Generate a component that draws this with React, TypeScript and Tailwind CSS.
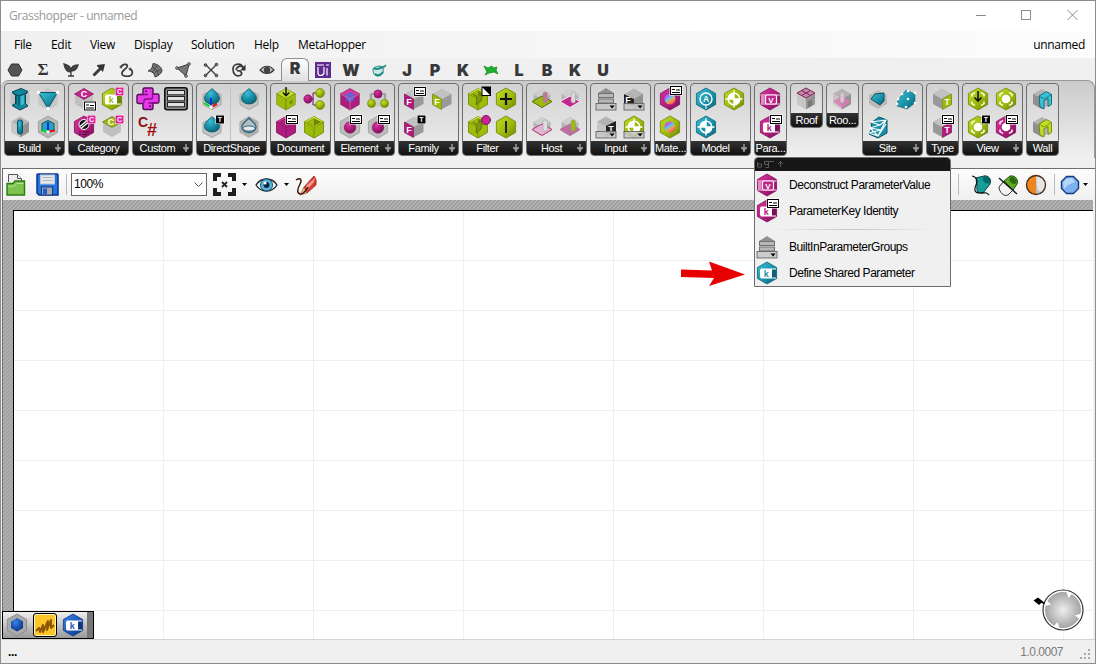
import React from "react";

type P = { children?: React.ReactNode };

const HEX = "12,1 21.6,6.5 21.6,17.5 12,23 2.4,17.5 2.4,6.5";

const tones = {
  m: ["#d9359f", "#b01c7e", "#7d0f58"],
  g: ["#c3dc28", "#9dbb0b", "#6d8404"],
  c: ["#3cc0d6", "#1993ab", "#0c6376"],
  s: ["#dcdcdc", "#b4b4b4", "#8e8e8e"],
  b: ["#3c86e6", "#1c58b8", "#0d3580"],
} as const;
type Tone = keyof typeof tones;

const Icon = ({ children }: P) => (
  <svg viewBox="0 0 24 24" className="block h-6 w-6 shrink-0 overflow-visible">{children}</svg>
);

const Defs = () => (
  <svg className="absolute h-0 w-0">
    <defs>
      {(Object.keys(tones) as Tone[]).map((k) => (
        <React.Fragment key={k}>
          <linearGradient id={"lin-" + k} x1="0" y1="0" x2="1" y2="1">
            <stop offset="0" stopColor={tones[k][0]} />
            <stop offset=".55" stopColor={tones[k][1]} />
            <stop offset="1" stopColor={tones[k][2]} />
          </linearGradient>
          <radialGradient id={"rad-" + k} cx=".38" cy=".3" r=".75">
            <stop offset="0" stopColor={tones[k][0]} />
            <stop offset=".5" stopColor={tones[k][1]} />
            <stop offset="1" stopColor={tones[k][2]} />
          </radialGradient>
        </React.Fragment>
      ))}
      <linearGradient id="rainbow" x1=".1" y1="0" x2=".8" y2="1">
        <stop offset="0" stopColor="#5b6df2" />
        <stop offset=".25" stopColor="#c55bf0" />
        <stop offset=".45" stopColor="#58c8f0" />
        <stop offset=".65" stopColor="#f5a04a" />
        <stop offset="1" stopColor="#f23b6a" />
      </linearGradient>
    </defs>
  </svg>
);

const Hex = ({ t }: { t: Tone }) => (
  <polygon points={HEX} fill={`url(#lin-${t})`} stroke={tones[t][2]} strokeWidth=".8" />
);

const Cube = ({ t }: { t: Tone }) => (
  <g strokeWidth=".6" strokeLinejoin="round">
    <polygon points="12,1.5 21.3,6.7 12,12 2.7,6.7" fill={tones[t][0]} stroke={tones[t][2]} />
    <polygon points="2.7,6.7 12,12 12,23 2.7,17.5" fill={tones[t][1]} stroke={tones[t][2]} />
    <polygon points="21.3,6.7 12,12 12,23 21.3,17.5" fill={tones[t][1]} stroke={tones[t][2]} />
  </g>
);

const SoftCube = () => (
  <g>
    <polygon points="12,1.5 21,6.7 12,12 3,6.7" fill="#b4b4b4" />
    <polygon points="3,6.7 12,12 12,22.5 3,17.3" fill="#c6c6c6" />
    <polygon points="21,6.7 12,12 12,22.5 21,17.3" fill="#929292" />
  </g>
);

const OpenCube = ({ t }: { t: Tone }) => (
  <g strokeWidth=".8" strokeLinejoin="round">
    <polygon points="12,1.5 21.5,6.7 21.5,17.5 12,23 2.5,17.5 2.5,6.7" fill={tones[t][1]} stroke={tones[t][2]} />
    <polygon points="12,1.5 21.5,6.7 12,12.3 2.5,6.7" fill={tones[t][0]} />
    <polygon points="12,3.8 18.5,7 12,10.6 5.5,7" fill={tones[t][2]} stroke={tones[t][2]} />
    <polygon points="12,3.8 12,10.6 5.5,7" fill={tones[t][1]} />
    <path d="M2.5 6.7 12 12.3 21.5 6.7M12 12.3V23" fill="none" stroke={tones[t][2]} />
  </g>
);

const Tag = ({ x = 12, y = 0 }: { x?: number; y?: number }) => (
  <g>
    <rect x={x - 0.5} y={y - 0.5} width="13" height="10" fill="#fff" />
    <rect x={x + 0.5} y={y + 0.5} width="11" height="8" fill="#fff" stroke="#000" />
    <path d={`M${x + 2} ${y + 3.5}h3M${x + 6} ${y + 4}h4M${x + 2} ${y + 6.5}h8`} stroke="#000" strokeWidth="1.2" />
  </g>
);

const Badge = ({ l, fill, x = 16, y = 0.5 }: { l: string; fill: string; x?: number; y?: number }) => (
  <g>
    <rect x={x - 0.5} y={y - 0.5} width="9" height="9" fill="#fff" />
    <rect x={x} y={y} width="8" height="8" fill={fill} />
    <text x={x + 4} y={y + 6.6} fontSize="7" fontWeight="700" textAnchor="middle" fill="#fff" fontFamily="Liberation Sans, sans-serif">{l}</text>
  </g>
);

const Ltr = ({ x, y, s = 9, f = "#fff", children }: P & { x: number; y: number; s?: number; f?: string }) => (
  <text x={x} y={y} fontSize={s} fontWeight="700" textAnchor="middle" fill={f} fontFamily="Liberation Sans, sans-serif">{children}</text>
);

const KBody = ({ t }: { t: Tone }) => (
  <g>
    <Hex t={t} />
    <path d="M6 7.5h15v10H6l-1-1.5V9z" fill="#fff" />
    <rect x="17" y="8.5" width="4.2" height="8" fill={tones[t][2]} />
    <Ltr x={11.3} y={16} s={9} f={tones[t][1]}>k</Ltr>
  </g>
);
const VIcon = () => (
  <Icon>
    <Hex t="m" />
    <path d="M2.5 8h19.3M2.5 17h19.3" stroke="#f7d4ea" strokeWidth="1.1" />
    <rect x="3" y="8.5" width="3.5" height="8" fill="#e58bc6" />
    <rect x="7.5" y="8" width="11" height="9" rx="1.5" fill="#bd2489" stroke="#fff" strokeWidth="1.2" />
    <Ltr x={13} y={15.6} s={8}>V</Ltr>
  </Icon>
);
const KTag = () => <Icon><KBody t="m" /><Tag /></Icon>;
const KCyan = () => <Icon><KBody t="c" /></Icon>;

const DropBox = () => (
  <g>
    <rect x="2" y="16.5" width="20" height="6.5" fill="#c4c4c4" fillOpacity=".85" stroke="#666" strokeWidth=".9" />
    <path d="M15.5 18.5h5.2l-2.6 3z" fill="#000" />
  </g>
);
const ListIcon = () => (
  <Icon>
    <path d="M4 6.5 12 1.5l8 5z" fill="#909090" stroke="#777" strokeWidth=".6" />
    <rect x="4.5" y="6.5" width="15" height="4" fill="#b8b8b8" stroke="#707070" />
    <rect x="4.5" y="12" width="15" height="4" fill="#b8b8b8" stroke="#707070" />
    <DropBox />
  </Icon>
);

const Target = ({ t }: { t: Tone }) => (
  <g>
    <Hex t={t} />
    <circle cx="12" cy="12" r="5.8" fill={tones[t][1]} stroke="#fff" strokeWidth="1.5" />
    <path d="M12 3.5v17M3.5 12h17" stroke="#fff" strokeWidth="1.4" />
    <path d="M12 6.5V12H6.5A5.5 5.5 0 0 1 12 6.5M12 17.5V12h5.5A5.5 5.5 0 0 1 12 17.5" fill="#fff" />
  </g>
);

const Ball = ({ x, y, r, t }: { x: number; y: number; r: number; t: Tone }) => (
  <circle cx={x} cy={y} r={r} fill={`url(#rad-${t})`} stroke={tones[t][2]} strokeWidth=".6" />
);

const Drop = () => (
  <g>
    <polygon points="12,3 21,7.5 21,17.5 12,22.5 3,17.5 3,7.5" fill="#c4c4c4" stroke="#a4a4a4" />
    <path d="M12 1.500c2 2.500 7.500 5.500 7.500 10a7.500 5.500 0 0 1-15 0c0-4.500 5.500-7.500 7.500-10z" fill="url(#rad-c)" stroke="#0c5365" strokeWidth=".8" />
  </g>
);

const Frame = ({ t }: { t: Tone }) => (
  <g>
    <Hex t={t} />
    <path d="M6 9.500V7.500L9 5.500M15 5.500l3 2v2M18 14.500v2l-3 2M9 18.500l-3-2v-2" fill="none" stroke="#fff" strokeWidth="1.500" />
  </g>
);
const ViewHex = ({ t }: { t: Tone }) => (
  <g>
    <Frame t={t} />
    <circle cx="12" cy="12" r="4.300" fill="#fff" />
  </g>
);
const FCube = ({ t }: { t: Tone }) => (
  <g>
    <polygon points="12,2 21.500,7 21.500,17 12,22 12,12 3,7" fill="#999" />
    <polygon points="12,2 21.500,7 12,12 3,7" fill="#c2c2c2" />
    <polygon points="2.500,7 11.500,12 11.500,22.500 2.500,17.500" fill={tones[t][1]} stroke={tones[t][2]} strokeWidth=".7" />
    <Ltr x={7} y={18} s={9}>F</Ltr>
  </g>
);
const TCube = ({ t }: { t: Tone }) => (
  <g>
    <polygon points="12,2 3,7 3,17 12,22 12,12 21,7" fill="#999" />
    <polygon points="3,7 12,2 21,7 12,12" fill="#c2c2c2" />
    <polygon points="12.500,12 21.500,7 21.500,17.500 12.500,22.500" fill={tones[t][1]} stroke={tones[t][2]} strokeWidth=".7" />
    <Ltr x={17} y={18} s={8.5}>T</Ltr>
  </g>
);
const HostBase = ({ fill, stroke, o = 1 }: { fill: string; stroke: string; o?: number }) => (
  <g>
    <polygon points="12,2 20.500,7 20.500,16 12,21 3.500,16 3.500,7" fill="#b5b5b5" />
    <polygon points="12,2 20.500,7 12,12 3.500,7" fill="#cfcfcf" />
    <polygon points="12,9 22,14.500 12,20.500 2,14.500" fill={fill} stroke={stroke} opacity={o} />
  </g>
);
const Pill = ({ fill, x = 13 }: { fill: string; x?: number }) => (
  <rect x={x} y="5" width="4.500" height="11" rx="2" fill={fill} stroke="#8a8a8a" strokeWidth=".4" />
);
const WallArch = ({ t }: { t: Tone }) => (
  <Icon>
    <polygon points="3,7 12,2 21,7 21,17 12,22 3,17" fill="#b2b2b2" />
    <polygon points="3,7 12,12 12,22 3,17" fill="#8f8f8f" />
    <path d="M9 9 16.500 4.500 21.500 7.500V17.500L18 19.500V11.500L14 13.800V22L10 20z" fill={tones[t][0]} stroke={tones[t][2]} strokeWidth=".9" strokeLinejoin="round" />
    <path d="M9 9 14 12 21.500 7.500" stroke={tones[t][2]} strokeWidth=".7" fill="none" />
  </Icon>
);

const icons: Record<string, React.ReactNode> = {
  beam: <Icon><polygon points={HEX} fill="#c2c2c2" /><path d="M4 5 13 1.500l7 3-2.500 3v9l2.500 2.500-8 4-8-4.500 3.500-2V8.500z" fill="#13899f" stroke="#0a4552" /><path d="M4 5.500 11 9l8-3.500M11 9v10M8 8v9" stroke="#064351" fill="none" /><path d="M12.500 9.500 16 8v9l-3.500 1.500z" fill="#3cbcd2" /></Icon>,
  tri: <Icon><polygon points={HEX} fill="#c6c6c6" /><path d="M2.500 5.500H21.500L12 21.500z" fill="url(#lin-c)" stroke="#0a5260" />{[[2.5, 5.5], [21.5, 5.5], [12, 21.5]].map(([x, y]) => <circle key={x} cx={x} cy={y} r="1.700" fill="#fff" />)}</Icon>,
  column: <Icon><SoftCube /><rect x="9.500" y="5" width="5" height="14" rx="2" fill="url(#rad-c)" stroke="#0b5566" /></Icon>,
  axes: <Icon><polygon points={HEX} fill="#b9b9b9" stroke="#a2a2a2" /><polygon points="12,5.500 18,8.500 18,15 12,18.500 6,15 6,8.500" fill="#24a7bd" stroke="#0b5566" /><path d="M12 16V7" stroke="#0930e0" strokeWidth="2.200" /><path d="M12 16.500 5 15.500" stroke="#00e020" strokeWidth="2" /><path d="M12 16.500l7-1" stroke="#e81010" strokeWidth="2" /><circle cx="12" cy="17" r="1.800" fill="#fff" /></Icon>,
  catTag: <Icon><polygon points="3,8 12,13 21,8 21,17 12,22 3,17" fill="#c0c0c0" /><polygon points="12,1.500 21.500,7 12,12.500 2.500,7" fill="#c2258d" stroke="#7d0f58" strokeWidth=".7" /><Ltr x={12} y={10.3}>C</Ltr><Tag x={12} y={14.5} /></Icon>,
  catK: <Icon><KBody t="g" /><Badge l="C" fill="#e0219a" x={15.5} /></Icon>,
  catHatch: <Icon><Hex t="m" /><circle cx="12" cy="9.500" r="5" fill="#111" stroke="#fff" /><path d="M8 11.500 14.500 6M9 13.500l7-6" stroke="#fff" strokeWidth="1.400" /><path d="M7 17h2M10.500 17H17M7 19.500h2M10.500 19.500H15" stroke="#4c0635" /><Badge l="C" fill="#e0219a" x={15.5} /></Icon>,
  catC: <Icon><polygon points="3,8 12,13 21,8 21,17 12,22 3,17" fill="#c0c0c0" /><polygon points="12,1.500 21.500,7 12,12.500 2.500,7" fill="#9dbb0b" stroke="#5c7003" strokeWidth=".7" /><Ltr x={11} y={10.3}>C</Ltr><Badge l="C" fill="#e0219a" x={15.5} /></Icon>,
  python: <Icon><path d="M8.500 1h7q1.500 0 1.500 1.500V7h4.500q1.500 0 1.500 1.500v6q0 1.500-1.500 1.500H17v5q0 1.500-1.500 1.500h-7Q7 22.500 7 21v-4.500H2.500Q1 16.500 1 15V9q0-1.500 1.500-1.500H7v-5Q7 1 8.500 1z" fill="#e838ea" stroke="#520c57" strokeWidth="1.400" strokeLinejoin="round" /><path d="M4 7.500h8M12.500 16H20M8 16v-2q0-2 2-2h4.500q2 0 2-2V7" fill="none" stroke="#7c1082" strokeWidth="1.300" /><circle cx="10" cy="4.300" r="1" fill="#520c57" /><circle cx="14" cy="19.300" r="1" fill="#520c57" /></Icon>,
  panel: <Icon><rect x=".800" y=".800" width="22.400" height="22" rx="2.500" fill="#8f8f8f" stroke="#111" strokeWidth="1.600" />{[4, 10, 16].map((y) => <rect key={y} x="3.500" y={y - 0.5} width="17" height="4.300" fill="#e2e2e2" stroke="#222" />)}</Icon>,
  csharp: <Icon><Ltr x={7} y={11.5} s={14} f="#8e1010">C</Ltr><Ltr x={16} y={20.5} s={18} f="#a31010">#</Ltr></Icon>,
  dsAxes: <Icon><Drop /><path d="M11 20V11" stroke="#0930e0" strokeWidth="2" /><path d="M11 20 4 16" stroke="#00e020" strokeWidth="2" /><path d="M11 20l6-3" stroke="#e81010" strokeWidth="2" /><circle cx="11" cy="20" r="1.800" fill="#fff" /></Icon>,
  dsDrop: <Icon><Drop /></Icon>,
  dsT: <Icon><Drop /><Badge l="T" fill="#000" /></Icon>,
  dsRing: <Icon><polygon points={HEX} fill="#b0b0b0" /><path d="M12 3c2.500 3 7 5 7 9a7 5.500 0 0 1-14 0c0-4 4.500-6 7-9z" fill="#b6bfc3" stroke="#32667d" strokeWidth="1.300" /><ellipse cx="12" cy="13.500" rx="6" ry="2.600" fill="#e6eaec" stroke="#32667d" /></Icon>,
  docDown: <Icon><Cube t="g" /><path d="M12 0v8.500M8.800 5.500 12 8.800l3.200-3.300" fill="none" stroke="#111" strokeWidth="1.400" /><path d="M15.500 14l3-1.700v4l-3 1.700z" fill="#7a9107" /></Icon>,
  docTree: <Icon><path d="M6 12H12M17 6h-6v12h6" fill="none" stroke="#6d1a52" /><Ball x={6} y={12} r={4.2} t="m" /><Ball x={18} y={6} r={4.5} t="g" /><Ball x={18} y={18} r={4.5} t="g" /></Icon>,
  docTag: <Icon><OpenCube t="m" /><Tag /></Icon>,
  docOpen: <Icon><OpenCube t="g" /></Icon>,
  elCube: <Icon><Cube t="m" /><polygon points="12,5 16.500,7.500 16.500,13 12,15.500 7.500,13 7.500,7.500" fill="#3f6fe0" opacity=".75" /><path d="M12 12V23M12 12l9-5M12 12 3 7" stroke="#e07fc0" strokeWidth=".8" fill="none" /></Icon>,
  elTree: <Icon><polygon points="12,1 21,6.500 21,15 12,20 3,15 3,6.500" fill="#cacaca" /><path d="M5 17V7h14v10" fill="none" stroke="#7a7a7a" /><Ball x={12} y={7} r={4} t="m" /><Ball x={5.5} y={16.5} r={4} t="g" /><Ball x={18.5} y={16.5} r={4} t="g" /></Icon>,
  elTag: <Icon><polygon points={HEX} fill="#bcbcbc" stroke="#a6a6a6" /><Ball x={12} y={12.5} r={5.7} t="m" /><Tag /></Icon>,
  famTag: <Icon><FCube t="m" /><Tag y={0} /></Icon>,
  famG: <Icon><FCube t="g" /></Icon>,
  famT: <Icon><FCube t="m" /><Badge l="T" fill="#000" x={15.5} /></Icon>,
  filBW: <Icon><OpenCube t="g" /><path d="M7 7l4 4-1 7 5-4 1-5" stroke="#5f7608" fill="#7e990a" strokeWidth="1" /><rect x="16" y="0" width="8.500" height="8.500" fill="#fff" stroke="#000" /><path d="M16 0h8.500v8.500z" fill="#000" /></Icon>,
  filPlus: <Icon><Hex t="g" /><path d="M12 6v12M6 12h12" stroke="#111" strokeWidth="2.200" /></Icon>,
  filDot: <Icon><OpenCube t="g" /><path d="M7 7l4 4-1 7 5-4 1-5" stroke="#5f7608" fill="#7e990a" strokeWidth="1" /><circle cx="20" cy="5" r="4.500" fill="#c4278f" stroke="#83135f" /></Icon>,
  filBar: <Icon><Hex t="g" /><path d="M12 6v12" stroke="#222" strokeWidth="2" /></Icon>,
  hostG: <Icon><HostBase fill="#9dbb0b" stroke="#5c7003" /><Pill fill="#c37896" /></Icon>,
  hostM: <Icon><HostBase fill="#c4278f" stroke="#f3f3f3" /><Pill fill="#d8d8d8" /></Icon>,
  hostP: <Icon><HostBase fill="#e3b7d2" stroke="#b5327f" /><Pill fill="#dedede" /></Icon>,
  hostPG: <Icon><HostBase fill="#c25c9e" stroke="#ad5c93" o={0.8} /><Pill fill="#9dbb0b" x={13} /></Icon>,
  list: <ListIcon />,
  inF: <Icon><SoftCube /><polygon points="2,7 12,12 12,18 2,17" fill="#222" /><Ltr x={6} y={16}>F</Ltr><DropBox /></Icon>,
  inT: <Icon><SoftCube /><polygon points="12,11 22,6 22,18 12,18" fill="#222" /><Ltr x={17} y={16.5}>T</Ltr><DropBox /></Icon>,
  inTarget: <Icon><Target t="g" /><DropBox /></Icon>,
  matM: <Icon><Hex t="m" /><circle cx="12" cy="12" r="5.500" fill="url(#rainbow)" /><Tag y={-1} /></Icon>,
  matG: <Icon><Hex t="g" /><circle cx="12" cy="12" r="5.500" fill="url(#rainbow)" /></Icon>,
  modA: <Icon><Hex t="c" /><circle cx="12" cy="12" r="6" fill="none" stroke="#fff" strokeWidth="1.400" /><Ltr x={12} y={15} s={8.5}>A</Ltr><path d="M12 18v4" stroke="#fff" /></Icon>,
  modG: <Icon><Target t="g" /></Icon>,
  modC: <Icon><Target t="c" /></Icon>,
  v: <VIcon />,
  kTag: <KTag />,
  roof: <Icon><SoftCube /><polygon points="12,1 21,6 12,11 3,6" fill="#c889aa" stroke="#7c2758" /><path d="M7.500 3.500l9 5M16.500 3.500l-9 5" stroke="#7c2758" /><path d="M14 14.500l4-2v6l-4 2z" fill="#777" /></Icon>,
  room: <Icon><SoftCube /><polygon points="12,9 21,14 12,21 3,14" fill="#e077b9" opacity=".8" /><Pill fill="#dcbfd1" x={10} /></Icon>,
  siteA: <Icon><polygon points="12,3 21,8 21,17 12,22 3,17 3,8" fill="#b9b9b9" /><path d="M5 12 9 7l9-1v8l-4 4z" fill="url(#lin-c)" stroke="#0a5160" /></Icon>,
  siteB: <Icon><path d="M4 13 12 3l9 4v9l-8 6-10-3z" fill="url(#lin-c)" stroke="#0a5160" strokeWidth=".5" />{[[3, 17], [4, 12], [8, 7], [14, 4], [21, 6], [21, 16], [12, 20], [14, 12]].map(([x, y]) => <circle key={x * 30 + y} cx={x} cy={y} r="1.300" fill="#fff" />)}</Icon>,
  siteC: <Icon><path d="M5 8 13 2l8 3v13l-9 5-9-4 3-6z" fill="#1790a8" stroke="#0a5160" /><path d="M5 7l15-2-6 5zM3 18l9 3 8-12M4 13l11 2 5-10M14 10 4 13l8 8 3-6-12 3" fill="none" stroke="#fff" strokeWidth="1.200" strokeLinejoin="round" /></Icon>,
  typeG: <Icon><TCube t="g" /></Icon>,
  typeM: <Icon><TCube t="m" /><Tag /></Icon>,
  viewD: <Icon><Frame t="g" /><path d="M12 4v10M8.500 10.500 12 14l3.500-3.500" fill="none" stroke="#111" strokeWidth="1.600" /></Icon>,
  viewG: <Icon><ViewHex t="g" /></Icon>,
  viewT: <Icon><ViewHex t="g" /><Badge l="T" fill="#000" /></Icon>,
  viewM: <Icon><ViewHex t="m" /><Tag /></Icon>,
  wallC: <WallArch t="c" />,
  wallG: <WallArch t="g" />,
};

const Label = ({ text, plus }: { text: string; plus?: boolean }) => (
  <div className="flex h-3.5 shrink-0 items-center bg-linear-to-b from-[#333] to-[#111] text-[11px] leading-[14px] tracking-[-0.35px] text-white">
    <span className="flex-1 text-center whitespace-nowrap">{text}</span>
    {plus && (
      <svg viewBox="0 0 8 8" className="mr-0.5 block h-2 w-2"><path d="M4 0v8M1 4h6" stroke="#aaa" strokeWidth="1.300" /><path d="M2 5l2 3 2-3z" fill="#999" /></svg>
    )}
  </div>
);

const Group = ({ name, rows, w, plus, ds }: { name: string; rows: string[][]; w: string; plus?: boolean; ds?: boolean }) => (
  <div className={`flex shrink-0 flex-col overflow-hidden rounded border border-[#6e6e6e] bg-linear-to-b from-[#d2d2d2] to-[#eee] ${w} ${rows.length > 1 ? "h-[73px]" : "h-[45px]"}`}>
    <div className="flex flex-1">
      <div className="flex flex-col gap-1 pt-[3px] pl-[3px]">
        {rows.map((r, i) => (
          <div key={i} className={`flex h-6 ${ds ? "gap-[6px]" : "gap-1"}`}>
            {r.map((k, j) => (
              <React.Fragment key={j}>
                {icons[k]}
                {ds && j === 0 && <span className="h-7 w-px bg-[#c2c2c2]" />}
              </React.Fragment>
            ))}
          </div>
        ))}
      </div>
    </div>
    <Label text={name} plus={plus} />
  </div>
);

const W = "w-[61px]";
const N = "w-[33px]";
const groups: { name: string; rows: string[][]; w: string; plus?: boolean; ds?: boolean }[] = [
  { name: "Build", w: W, plus: true, rows: [["beam", "tri"], ["column", "axes"]] },
  { name: "Category", w: W, rows: [["catTag", "catK"], ["catHatch", "catC"]] },
  { name: "Custom", w: W, plus: true, rows: [["python", "panel"], ["csharp"]] },
  { name: "DirectShape", w: "w-[71px]", ds: true, rows: [["dsAxes", "dsDrop"], ["dsT", "dsRing"]] },
  { name: "Document", w: W, rows: [["docDown", "docTree"], ["docTag", "docOpen"]] },
  { name: "Element", w: W, plus: true, rows: [["elCube", "elTree"], ["elTag", "elTag"]] },
  { name: "Family", w: W, plus: true, rows: [["famTag", "famG"], ["famT"]] },
  { name: "Filter", w: W, plus: true, rows: [["filBW", "filPlus"], ["filDot", "filBar"]] },
  { name: "Host", w: W, plus: true, rows: [["hostG", "hostM"], ["hostP", "hostPG"]] },
  { name: "Input", w: W, plus: true, rows: [["list", "inF"], ["inT", "inTarget"]] },
  { name: "Mate...", w: N, rows: [["matM"], ["matG"]] },
  { name: "Model", w: W, plus: true, rows: [["modA", "modG"], ["modC"]] },
  { name: "Para...", w: N, rows: [["v"], ["kTag"]] },
  { name: "Roof", w: N, rows: [["roof"]] },
  { name: "Roo...", w: N, rows: [["room"]] },
  { name: "Site", w: W, plus: true, rows: [["siteA", "siteB"], ["siteC"]] },
  { name: "Type", w: N, rows: [["typeG"], ["typeM"]] },
  { name: "View", w: W, plus: true, rows: [["viewD", "viewG"], ["viewT", "viewM"]] },
  { name: "Wall", w: N, rows: [["wallC"], ["wallG"]] },
];

const Glyph = ({ children }: P) => (
  <svg viewBox="0 0 16 16" className="block h-4 w-4 overflow-visible" fill="none" stroke="#3a3a3a">{children}</svg>
);
const letter = (l: string) => <span className="font-['Inter','Liberation_Sans',sans-serif] text-[16px] leading-4 font-black text-[#383838]">{l}</span>;

const tabs: React.ReactNode[] = [
  <Glyph><path d="M4.500 2h7L15 8l-3.500 6h-7L1 8z" fill="#555" stroke="#333" /></Glyph>,
  <span className="font-['Liberation_Serif',serif] text-[17px] leading-4 font-bold text-[#333]">Σ</span>,
  <Glyph><path d="M8 14V9M8 10C4 10 2 7 1 2c4 1 7 3 7 7 0-4 2-6 7-6-1 4-3 6-7 6M5 14h6" fill="#444" strokeWidth="1.300" /></Glyph>,
  <Glyph><path d="M6 3l8-1-2 8-6-6" fill="#333" stroke="none" /><path d="M2.500 13.500 10 6" strokeWidth="3" /></Glyph>,
  <Glyph><path d="M2 5c2-4 8-3 6 0S2 9 3 12s9 3 10 0 0-4-2-5" strokeWidth="1.700" /><circle cx="2" cy="5" r="1" /><circle cx="11" cy="7" r="1" /></Glyph>,
  <Glyph><path d="M1 9C4 8 6 5 6 1.500c5 .500 9 4 9 7.500-1 3-4 5-7 6C8 12 5 9 1 9z" fill="#777" /><path d="M5 5c4 1 6 4 6 8M10 3c-1 3-3 5-5 7M14 8c-3 0-6 2-8 4" stroke="#444" strokeWidth=".800" /></Glyph>,
  <Glyph><path d="M2 6 14 2l-3 12z" fill="#777" />{[[2, 6], [14, 2], [11, 14]].map(([x, y]) => <circle key={x} cx={x} cy={y} r="1.300" fill="#ddd" />)}</Glyph>,
  <Glyph><path d="M3 3l10 10M13 3 3 13" strokeWidth="1.300" />{[[2.5, 3], [13.5, 2.5], [13.5, 13.5], [2.5, 13.5]].map(([x, y]) => <circle key={x * 20 + y} cx={x} cy={y} r="1.300" fill="#777" />)}</Glyph>,
  <Glyph><path d="M12 5C9 0 2 2 2 7s3 8 7 6.500 0-6-3-4.500M5 8c1-4 5-5 8-2" strokeWidth="1.700" /><path d="M14.500 2.500v6H9z" fill="#333" stroke="none" /></Glyph>,
  <Glyph><path d="M1 8c4-5 10-5 14 0-4 4.500-10 4.500-14 0z" fill="#bbb" strokeWidth="1.200" /><circle cx="8" cy="8" r="2.700" fill="#444" /></Glyph>,
  letter("R"),
  <span className="flex h-4 w-4 items-center justify-center bg-[#5f2a91]"><svg viewBox="0 0 16 16" className="h-4 w-4" fill="none" stroke="#fff" strokeWidth="1.200"><path d="M3 5v6q0 2.500 2.500 2.500T9 11V5M12 6v7.500M2 3h7M11 3h3" /></svg></span>,
  letter("W"),
  <Glyph><path d="M2 6.500c3-2.500 7-3 9-1.500l4-2-1 2-2 1c1 4-1 8-5 8s-5-3-5-7.500z" fill="#cfe6e4" stroke="#188c83" strokeWidth="1" /><path d="M3 6.500c4 1 7 0 9-2M4 12c2 2 6 1.500 8-2" stroke="#188c83" strokeWidth="2" /></Glyph>,
  letter("J"),
  letter("P"),
  letter("K"),
  <Glyph><path d="M1 4l4 2 4-2 1 2 4-1-1 3 2 4-4-2-5 1-4 2 2-3z" fill="#1faf2f" stroke="#148a20" strokeWidth=".800" /></Glyph>,
  letter("L"),
  letter("B"),
  letter("K"),
  letter("U"),
];

const Caret = () => <svg viewBox="0 0 5 3" className="block h-[3px] w-[5px]"><path d="M0 0h5L2.500 3z" fill="#000" /></svg>;
const Cap = ({ w, children }: P & { w: string }) => <span className={`shrink-0 whitespace-nowrap ${w}`}>{children}</span>;

const Toolbar = () => (
  <div className="flex h-8 shrink-0 items-center border-t border-l border-[#6e6e6e] bg-linear-to-b from-[#fcfcfc] to-[#f0f0f0]">
    <svg viewBox="0 0 20 23" className="ml-[3px] h-[23px] w-5 shrink-0"><path d="M2.500 9V1.500h9l4 4V10" fill="#eee" stroke="#555" /><path d="M11.500 1.500v4h4" fill="#fff" stroke="#555" /><path d="M1 10.500h6l2-2.500h9.500v14H1z" fill="#7cc24d" stroke="#2c7a12" strokeWidth="1.400" /><path d="M2 13.500 8 13l3-2.500h6.500" stroke="#b5e594" fill="none" /></svg>
    <svg viewBox="0 0 23 23" className="ml-2.5 h-[23px] w-[23px] shrink-0"><path d="M1 2q0-1 1-1h19q1 0 1 1v20H3l-2-2z" fill="#2474dc" stroke="#0b318f" strokeWidth="1.500" /><rect x="4.500" y="2" width="14" height="9" fill="#e3e6ea" stroke="#b8c6de" /><path d="M6.500 4.500h10M6.500 7.500h10" stroke="#b7b7b7" /><rect x="5.500" y="14" width="11" height="8" fill="#aaa" stroke="#123b8f" /><rect x="7" y="15.500" width="4" height="6" fill="#1f5fc4" /></svg>
    <span className="ml-[7px] h-[21px] w-px shrink-0 bg-[#bcbcbc]" />
    <div className="ml-1 flex h-[23px] w-[136px] shrink-0 items-center justify-between border border-[#666] bg-white pr-[3px] pl-0.5 text-[12px] tracking-[-0.4px]">
      <span className="-mt-0.5">100%</span>
      <svg viewBox="0 0 9 6" className="h-1.5 w-[9px]"><path d="M.500.500 4.500 4.500l4-4" fill="none" stroke="#555" /></svg>
    </div>
    <svg viewBox="0 0 23 23" className="ml-1.5 h-[23px] w-[23px] shrink-0"><path d="M2 8V2h6M15 2h6v6M21 15v6h-6M8 21H2v-6" fill="none" stroke="#1d1d1d" strokeWidth="4" /><path d="M9 9l5 5M14 9l-5 5" stroke="#222" strokeWidth="1.800" /></svg>
    <span className="ml-1.5 shrink-0"><Caret /></span>
    <svg viewBox="0 0 23 16" className="ml-2 h-4 w-[23px] shrink-0"><path d="M1 8C6 0 17 0 22 8 17 16 6 16 1 8z" fill="#eef5f9" stroke="#222" strokeWidth="1.300" /><circle cx="11.500" cy="8" r="6" fill="#5eb4dd" stroke="#174f75" /><circle cx="11.500" cy="8" r="3" fill="#0d293d" /><circle cx="10" cy="6" r="1.500" fill="#fff" /></svg>
    <span className="ml-1.5 shrink-0"><Caret /></span>
    <svg viewBox="0 0 23 23" className="ml-1.5 h-[23px] w-[23px] shrink-0"><path d="M9 14 19 3q3 3 2 9l-9 8z" fill="#dd3a32" stroke="#8d1813" strokeWidth=".700" /><path d="M11 13l9-8-1 4-7 8z" fill="#f49a91" /><path d="M9 14l3 6-7 2z" fill="#eebd8e" stroke="#7a4525" strokeWidth=".600" /><path d="M1 7c5-3 6 0 4 4s-4 9 0 10 6-4 8-7" fill="none" stroke="#3a120b" strokeWidth="1.400" /></svg>
    <span className="flex-1" />
    <span className="h-[21px] w-px shrink-0 bg-[#bcbcbc]" />
    <svg viewBox="0 0 22 22" className="ml-3 h-[22px] w-[22px] shrink-0"><path d="M5 4 13 2c4-1 8 3 6 8l-7 9c-4 1-7-2-6-6z" fill="#169f9a" stroke="#083c3d" /><path d="M1 2c5 1 6 5 4 9s-2 8 4 8 6-1 9 2" fill="none" stroke="#111" strokeWidth="1.200" /><ellipse cx="15.500" cy="6" rx="4" ry="3" fill="#076967" transform="rotate(40 15.500 6)" /></svg>
    <svg viewBox="0 0 22 22" className="ml-1 h-[22px] w-[22px] shrink-0"><path d="M2 13 7 7l9 9-5 5c-4 2-9-3-9-8z" fill="#f2f2f2" stroke="#333" /><path d="M7 7l6-5c5-1 9 4 7 8l-4 6z" fill="#5eab20" stroke="#234c0b" /><ellipse cx="16" cy="6.500" rx="4" ry="2.800" fill="#2c6b0b" transform="rotate(45 16 6.500)" /><path d="M2 4l18 16" stroke="#111" strokeWidth="1.300" /></svg>
    <svg viewBox="0 0 22 22" className="ml-1.5 h-[22px] w-[22px] shrink-0"><circle cx="11" cy="11" r="9.500" fill="#e5e5e5" /><path d="M11 1.500a9.500 9.500 0 0 0 0 19z" fill="#ee861d" /><path d="M11 1.500v19a9.500 9.500 0 0 0 7-3c-4 1-6-1-6-7z" fill="#888" opacity=".4" /><circle cx="11" cy="11" r="9.500" fill="none" stroke="#4a2811" strokeWidth="1.300" /></svg>
    <span className="ml-[7px] h-[21px] w-px shrink-0 bg-[#bcbcbc]" />
    <svg viewBox="0 0 20 20" className="ml-[5px] h-5 w-5 shrink-0"><path d="M6.500 1.500h7l5 5v7l-5 5h-7l-5-5v-7z" fill="#7db2ee" stroke="#173b7d" strokeWidth="1.400" strokeLinejoin="round" /><path d="M6 4l6-1 3 4-7 3-4 4-1-6z" fill="#c5e0fb" opacity=".8" /></svg>
    <span className="mr-[7px] ml-[3px] shrink-0"><Caret /></span>
  </div>
);

const MenuRow = ({ icon, children }: P & { icon: React.ReactNode }) => (
  <div className="flex h-[26px] items-center">
    {icon}
    <span className="ml-[10px] text-[12px] tracking-[-0.46px] whitespace-nowrap">{children}</span>
  </div>
);

const Popup = () => (
  <div className="absolute top-[157px] left-[754px] h-[130px] w-[197px] overflow-hidden rounded-t border border-[#6d6d6d] bg-[#f0f0f0]">
    <div className="mb-px h-[13px] bg-[#171717]">
      <svg viewBox="0 0 30 13" className="h-[13px] w-[30px]" fill="none" stroke="#5c5c5c"><path d="M2.500 4v5h4v-3h-4M13.500 6.500h-4v-3h4v6h-3M14 3.500h5M25.500 9V3.500M23 6l2.500-2.500L28 6" /></svg>
    </div>
    <MenuRow icon={<VIcon />}>Deconstruct ParameterValue</MenuRow>
    <MenuRow icon={<KTag />}>ParameterKey Identity</MenuRow>
    <div className="flex h-2.5 items-center justify-center"><span className="h-px w-[165px] bg-linear-to-r from-transparent via-[#c4c4c4] to-transparent" /></div>
    <MenuRow icon={<ListIcon />}>BuiltInParameterGroups</MenuRow>
    <MenuRow icon={<KCyan />}>Define Shared Parameter</MenuRow>
  </div>
);

const grid = "bg-[linear-gradient(to_right,#efefef_1px,transparent_1px),linear-gradient(to_bottom,#efefef_1px,transparent_1px)] bg-[size:150px_50px] bg-[position:149px_49px]";

export default function App() {
  return (
    <div className="relative flex h-[664px] w-[1096px] flex-col overflow-hidden border border-[#8c8c8c] bg-[#f0f0f0] font-['Liberation_Sans',Arial,sans-serif] text-black">
      <Defs />
      <header className="flex h-[30px] shrink-0 items-center bg-white pr-[17px] pl-2 font-['Open_Sans',sans-serif] text-[12px] text-[#999]">
        <span className="tracking-[-0.4px]">Grasshopper - unnamed</span>
        <span className="flex-1" />
        <svg viewBox="0 0 102 12" className="-mt-0.5 h-3 w-[102px]" fill="none" stroke="#8a8a8a"><path d="M0 6.500h10M91.500 1l10 10M101.500 1l-10 10" /><rect x="45.500" y="1.500" width="9" height="9" /></svg>
      </header>
      <nav className="flex h-[27px] shrink-0 items-center bg-linear-to-r from-[#f0f0f0] to-[#fcfcfc] pr-[10px] pl-[13px] font-['Open_Sans',sans-serif] text-[12px] tracking-[-0.3px]">
        <Cap w="w-[37px]">File</Cap>
        <Cap w="w-[39px]">Edit</Cap>
        <Cap w="w-[44px]">View</Cap>
        <Cap w="w-[57px]">Display</Cap>
        <Cap w="w-[63px]">Solution</Cap>
        <Cap w="w-[44px]">Help</Cap>
        <Cap w="flex-1">MetaHopper</Cap>
        <span>unnamed</span>
      </nav>
      <div className="flex h-[22px] shrink-0">
        {tabs.map((t, i) =>
          i === 10 ? (
            <div key={i} className="z-10 flex h-[23px] w-7 shrink-0 items-start justify-center rounded-t-md border border-b-0 border-[#8f8f8f] bg-linear-to-b from-white to-[#e0e0e0] pt-px">{t}</div>
          ) : (
            <div key={i} className="flex h-[23px] w-7 shrink-0 items-center justify-center">{t}</div>
          )
        )}
      </div>
      <section className="flex h-[78px] shrink-0 items-start gap-[3px] rounded-t-lg border-t border-r border-[#999] bg-linear-to-b from-[#cbcbcb] to-[#f0f0f0] pt-0.5 pl-[3px]">
        {groups.map((g, i) => <Group key={i} {...g} />)}
      </section>
      <div className="h-2.5 shrink-0" />
      <main className="ml-px flex min-h-0 flex-1 flex-col">
        <Toolbar />
        <div className="relative mr-0.5 h-[439px] shrink-0 border-l border-[#6e6e6e] bg-[repeating-linear-gradient(135deg,#a0a0a0_0px,#a0a0a0_1.4px,#b0b0b0_1.4px,#b0b0b0_2.828px)] pt-2.5 pl-[10px]">
          <div className={`h-full border-t border-l border-black bg-white ${grid}`} />
          <div className="absolute bottom-0 -left-px flex h-7 w-[92px] items-center border border-black bg-linear-to-b from-[#efefef] to-[#9a9a9a]">
            <svg viewBox="0 0 24 24" className="ml-0.5 h-6 w-6"><polygon points={HEX} fill="#aaa" stroke="#8d8d8d" /><polygon points="12,5 18,8.500 18,15 12,18.500 6,15 6,8.500" fill="url(#rad-b)" /></svg>
            <div className="ml-1 h-6 w-6 rounded-[3px] border border-black bg-[#fdc528] ring-1 ring-[#fff5c0] ring-inset">
              <svg viewBox="0 0 22 22" className="h-[22px] w-[22px]" fill="none" stroke="#8c5604" strokeWidth="2" strokeLinejoin="round"><path d="M2 17l3-3 1 4 3-7 0 7 5-11-1 9 4-10 0 8 3-3" /></svg>
            </div>
            <span className="ml-1"><Icon><KBody t="b" /></Icon></span>
            <span className="ml-auto h-full w-1.5 bg-[#777]" />
          </div>
          <svg viewBox="0 0 52 44" className="absolute right-[8px] bottom-[7px] h-11 w-[52px]">
            <defs><radialGradient id="orb"><stop offset="0" stopColor="#eee" /><stop offset="1" stopColor="#a5a5a5" /></radialGradient></defs>
            <circle cx="30" cy="22" r="20" fill="#fff" stroke="#333" strokeWidth="1.200" />
            <circle cx="30" cy="22" r="18" fill="url(#orb)" />
            <path d="M33.500 4l6 1-4 5zM48 25.500l-1 6-5-4zM26.500 40l-6-1.500 4-4.500zM12 18l1.500-6 4.500 4.500z" fill="#fff" />
            <path d="M.500 12.500 5 9.500l5 4-4 3.500z" fill="#000" /><path d="M8 13.500l3.500 2" stroke="#000" strokeWidth="2" />
          </svg>
        </div>
        <footer className="flex flex-1 items-center border-t border-[#d5d5d5] pr-1 pl-1.5 text-[12px]">
          <span className="font-bold tracking-[-0.3px]">...</span>
          <span className="flex-1" />
          <span className="mr-[17px] tracking-[-0.5px] text-[#7b7b7b]">1.0.0007</span>
          <svg viewBox="0 0 11 11" className="mt-1.5 h-[11px] w-[11px]" fill="#a8a8a8">{[[8, 0], [4, 4], [8, 4], [0, 8], [4, 8], [8, 8]].map(([x, y]) => <rect key={x * 20 + y} x={x} y={y} width="2" height="2" />)}</svg>
        </footer>
      </main>
      <div className="absolute -top-px -left-px"><Popup /></div>
      <svg viewBox="0 0 64 26" className="absolute top-[260px] left-[680px] h-[26px] w-16"><path d="M0 8.500 31 9.500 28 .500 64 13.500 28 25 33 17 0 16z" fill="#e60000" /></svg>
    </div>
  );
}
